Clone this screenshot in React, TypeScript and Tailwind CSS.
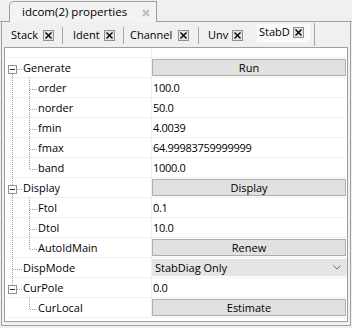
import React from "react";

type Row = {
  name: string;
  lvl: 0 | 1;
  exp?: boolean;
  above?: boolean;
  below?: boolean;
  root?: boolean;
  last?: boolean;
  kind: "text" | "button" | "select";
  value: string;
};

const rows: Row[] = [
  { name: "Generate", lvl: 0, exp: true, above: false, below: true, kind: "button", value: "Run" },
  { name: "order", lvl: 1, root: true, kind: "text", value: "100.0" },
  { name: "norder", lvl: 1, root: true, kind: "text", value: "50.0" },
  { name: "fmin", lvl: 1, root: true, kind: "text", value: "4.0039" },
  { name: "fmax", lvl: 1, root: true, kind: "text", value: "64.99983759999999" },
  { name: "band", lvl: 1, root: true, last: true, kind: "text", value: "1000.0" },
  { name: "Display", lvl: 0, exp: true, above: true, below: true, kind: "button", value: "Display" },
  { name: "Ftol", lvl: 1, root: true, kind: "text", value: "0.1" },
  { name: "Dtol", lvl: 1, root: true, kind: "text", value: "10.0" },
  { name: "AutoIdMain", lvl: 1, root: true, last: true, kind: "button", value: "Renew" },
  { name: "DispMode", lvl: 0, exp: false, above: true, below: true, kind: "select", value: "StabDiag Only" },
  { name: "CurPole", lvl: 0, exp: true, above: true, below: false, kind: "text", value: "0.0" },
  { name: "CurLocal", lvl: 1, root: false, last: true, kind: "button", value: "Estimate" },
];

const G = "#a0a0a0";

function Dot(props: { x1: number; y1: number; x2: number; y2: number }) {
  return (
    <line
      x1={props.x1}
      y1={props.y1}
      x2={props.x2}
      y2={props.y2}
      stroke={G}
      strokeWidth={1}
      strokeDasharray="1 1"
      shapeRendering="crispEdges"
    />
  );
}

function Tree({ r }: { r: Row }) {
  const els: React.ReactNode[] = [];
  if (r.lvl === 0) {
    if (r.exp) {
      if (r.above) els.push(<Dot key="a" x1={7.5} y1={0} x2={7.5} y2={7} />);
      if (r.below) els.push(<Dot key="b" x1={7.5} y1={16} x2={7.5} y2={20} />);
      els.push(<Dot key="h" x1={12} y1={11.5} x2={17} y2={11.5} />);
      els.push(
        <rect key="r" x={3.5} y={7.5} width={8} height={8} fill="#fcfcfc" stroke="#919191" shapeRendering="crispEdges" />
      );
      els.push(
        <line key="m" x1={5} y1={11.5} x2={10} y2={11.5} stroke="#2b2b5a" strokeWidth={1} shapeRendering="crispEdges" />
      );
    } else {
      els.push(<Dot key="v" x1={7.5} y1={0} x2={7.5} y2={20} />);
      els.push(<Dot key="h" x1={8} y1={11.5} x2={17} y2={11.5} />);
    }
  } else {
    if (r.root) els.push(<Dot key="v" x1={7.5} y1={0} x2={7.5} y2={20} />);
    els.push(<Dot key="c" x1={24.5} y1={0} x2={24.5} y2={r.last ? 12 : 20} />);
    els.push(<Dot key="h" x1={25} y1={11.5} x2={33} y2={11.5} />);
  }
  return (
    <svg className="absolute left-0 top-0" width={40} height={20} viewBox="0 0 40 20">
      {els}
    </svg>
  );
}

function XBox() {
  return (
    <span className="flex h-[11px] w-[11px] shrink-0 items-center justify-center border border-[#8f8f8f] bg-[#e3e3e3]">
      <svg width="9" height="9" viewBox="0 0 9 9">
        <path d="M1.5 1.5 L7.5 7.5 M7.5 1.5 L1.5 7.5" stroke="#000" strokeWidth="1.4" />
      </svg>
    </span>
  );
}

function Value({ r }: { r: Row }) {
  if (r.kind === "button") {
    return (
      <div className="mt-[1px] flex h-[17px] w-[194px] items-center justify-center border border-[#adadad] bg-[#e1e1e1] leading-none">
        {r.value}
      </div>
    );
  }
  if (r.kind === "select") {
    return (
      <div className="mt-[1px] flex h-[17px] w-[195px] items-center justify-between bg-[#e5e5e5] pl-[3px] pr-[6px] leading-none">
        <span>{r.value}</span>
        <svg width="8" height="5" viewBox="0 0 8 5">
          <path d="M0.5 0.5 L4 4 L7.5 0.5" fill="none" stroke="#6d6d6d" strokeWidth="1" />
        </svg>
      </div>
    );
  }
  return <div className="h-[19px] pl-[1px] leading-[20px] tracking-[-0.3px]">{r.value}</div>;
}

export default function App() {
  return (
    <div className="h-[328px] w-[352px] overflow-hidden bg-[#f0f0f0] font-['Open_Sans',sans-serif] text-[11px] text-black">
      {/* title row */}
      <div className="flex h-[22px] items-end">
        <div className="h-full w-[9px] border-b border-[#a0a0a0]" />
        <div className="flex h-[21px] w-[148px] items-center rounded-tl-[5px] border-l border-r border-t border-[#a0a0a0] bg-[#f3f3f3] pl-[12px] text-[11.5px]">
          <span className="w-[120px]">idcom(2) properties</span>
          <svg width="8" height="8" viewBox="0 0 8 8" className="mt-[1px]">
            <path d="M1 1 L7 7 M7 1 L1 7" stroke="#bdbdbd" strokeWidth="1.8" />
          </svg>
        </div>
        <div className="h-full flex-1 border-b border-[#a0a0a0]" />
      </div>

      {/* panel */}
      <div className="ml-[1px] h-[304px] w-[350px] border-b border-l border-r border-[#a0a0a0]">
        {/* tab strip */}
        <div className="flex h-[25px] items-center pt-[1px]">
          <div className="w-[9px]" />
          <span className="w-[32px]">Stack</span>
          <XBox />
          <div className="w-[8px]" />
          <div className="h-[17px] w-px bg-[#a8a8a8]" />
          <div className="w-[10px]" />
          <span className="w-[31px]">Ident</span>
          <XBox />
          <div className="w-[8px]" />
          <div className="h-[17px] w-px bg-[#a8a8a8]" />
          <div className="w-[6px]" />
          <span className="w-[48px]">Channel</span>
          <XBox />
          <div className="w-[9px]" />
          <div className="h-[17px] w-px bg-[#a8a8a8]" />
          <div className="w-[9px]" />
          <span className="w-[24px]">Unv</span>
          <XBox />
          <div className="w-[14px]" />
          <div className="mb-[5px] flex h-[18px] w-[53px] items-center bg-[#fafafa] pl-[2px]">
            <span className="w-[34px]">StabD</span>
            <XBox />
          </div>
          <div className="w-[4px]" />
          <div className="h-[23px] w-px self-start bg-[#a8a8a8]" />
        </div>

        {/* property grid */}
        <div className="ml-[2px] h-[275px] w-[344px] border border-[#a0a0a0] bg-white">
          <div className="flex h-[10px] border-b border-[#f0f0f0]">
            <div className="h-full w-[147px] border-r border-[#f0f0f0]" />
          </div>
          {rows.map((r) => (
            <div key={r.name} className="flex h-[20px] border-b border-[#f0f0f0]">
              <div className="relative h-full w-[147px] border-r border-[#f0f0f0]">
                <Tree r={r} />
                <div className={r.lvl === 0 ? "pl-[18px] leading-[20px]" : "pl-[33px] leading-[20px]"}>{r.name}</div>
              </div>
              <div className="h-full w-[195px]">
                <Value r={r} />
              </div>
            </div>
          ))}
        </div>
      </div>
    </div>
  );
}
